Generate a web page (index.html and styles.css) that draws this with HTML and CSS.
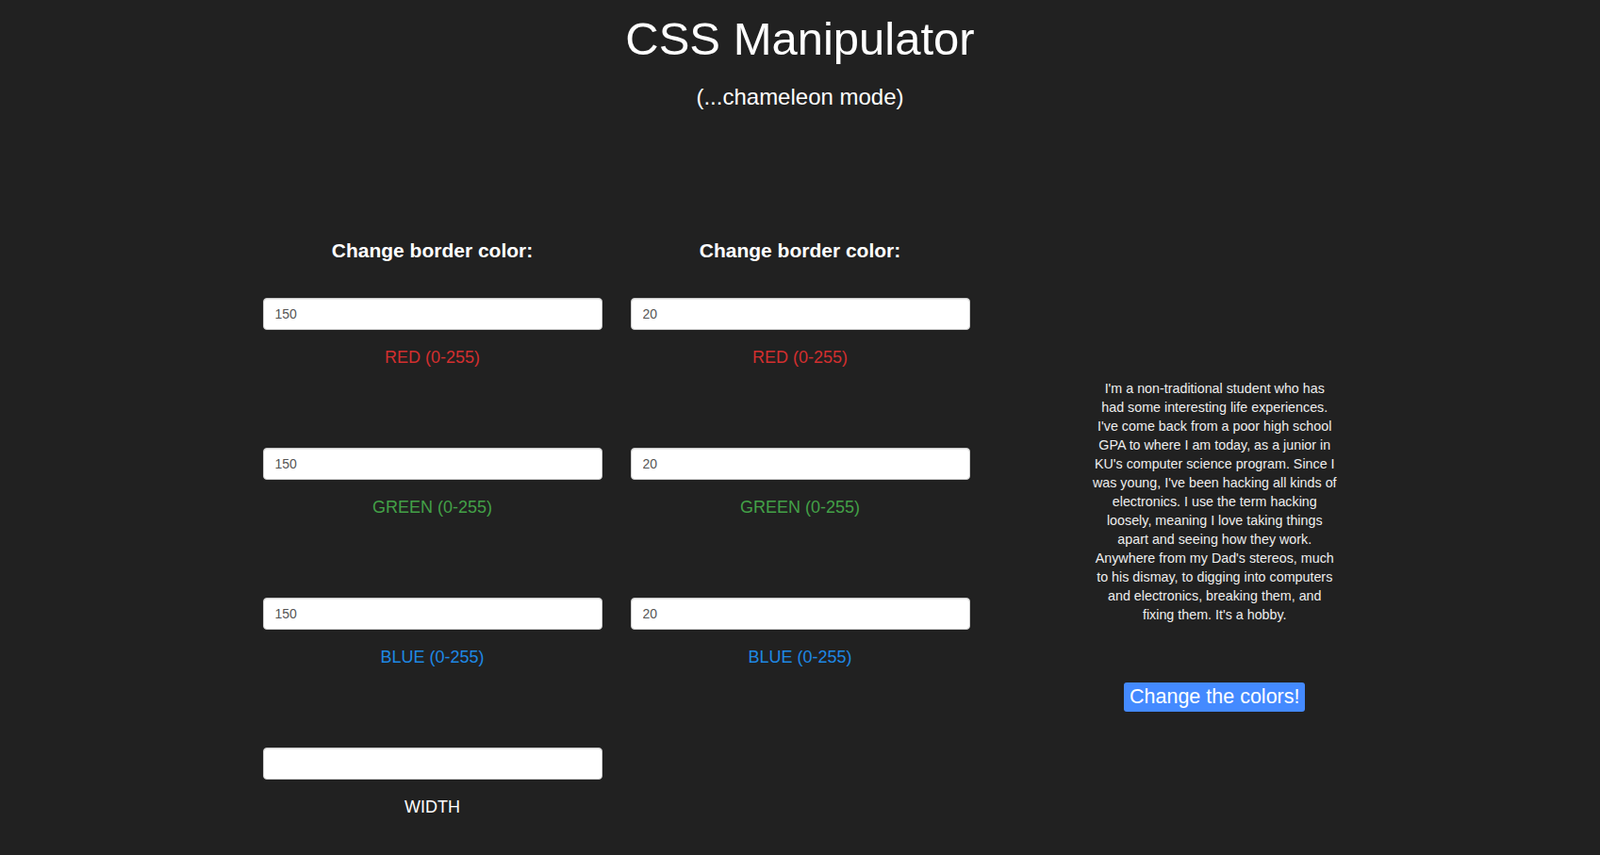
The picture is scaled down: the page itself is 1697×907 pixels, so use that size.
FILE: index.html
```html
<!DOCTYPE html>
<html lang="en">
<head>
<meta charset="utf-8">
<title>CSS Manipulator</title>
<link rel="stylesheet" href="styles.css">
</head>
<body>
<header class="page-header">
  <h1 class="title">CSS Manipulator</h1>
  <p class="subtitle">(...chameleon mode)</p>
</header>
<main class="container">
  <section class="col">
    <h3 class="col-heading">Change border color:</h3>
    <div class="field">
      <input class="form-control" type="text" value="150">
      <p class="field-label red">RED (0-255)</p>
    </div>
    <div class="field">
      <input class="form-control" type="text" value="150">
      <p class="field-label green">GREEN (0-255)</p>
    </div>
    <div class="field">
      <input class="form-control" type="text" value="150">
      <p class="field-label blue">BLUE (0-255)</p>
    </div>
    <div class="field">
      <input class="form-control" type="text" value="">
      <p class="field-label white">WIDTH</p>
    </div>
  </section>
  <section class="col">
    <h3 class="col-heading">Change border color:</h3>
    <div class="field">
      <input class="form-control" type="text" value="20">
      <p class="field-label red">RED (0-255)</p>
    </div>
    <div class="field">
      <input class="form-control" type="text" value="20">
      <p class="field-label green">GREEN (0-255)</p>
    </div>
    <div class="field">
      <input class="form-control" type="text" value="20">
      <p class="field-label blue">BLUE (0-255)</p>
    </div>
  </section>
  <section class="col col-about">
    <div class="about-box">
      <p class="about">I'm a non-traditional student who has had some interesting life experiences. I've come back from a poor high school GPA to where I am today, as a junior in KU's computer science program. Since I was young, I've been hacking all kinds of electronics. I use the term hacking loosely, meaning I love taking things apart and seeing how they work. Anywhere from my Dad's stereos, much to his dismay, to digging into computers and electronics, breaking them, and fixing them. It's a hobby.</p>
      <div class="btn-wrap">
        <button class="btn" type="button">Change the colors!</button>
      </div>
    </div>
  </section>
</main>
</body>
</html>
```

FILE: styles.css
```css
html, body {
  margin: 0;
  padding: 0;
}

body {
  background: #212121;
  color: #ffffff;
  font-family: "Liberation Sans", Arial, Helvetica, sans-serif;
  font-size: 14px;
  line-height: 20px;
  min-height: 907px;
}

.page-header {
  text-align: center;
  padding-top: 14px;
}

.title {
  margin: 0;
  font-size: 49px;
  font-weight: 400;
  line-height: 55px;
}

.subtitle {
  margin: 20px 0 0;
  font-size: 24px;
  line-height: 28px;
}

.container {
  width: 1170px;
  margin: 0 auto;
  display: grid;
  grid-template-columns: 390px 390px 390px;
  padding-top: 137px;
}

.col {
  padding: 0 15px;
  text-align: center;
}

.col-heading {
  margin: 0 0 39px;
  font-size: 21px;
  font-weight: 700;
  line-height: 23px;
}

.field {
  margin-bottom: 85px;
}

.form-control {
  display: block;
  box-sizing: border-box;
  width: 100%;
  height: 34px;
  margin: 0;
  padding: 6px 12px;
  font-family: "Liberation Sans", Arial, Helvetica, sans-serif;
  font-size: 14px;
  line-height: 20px;
  color: #555555;
  background: #ffffff;
  border: 1px solid #cccccc;
  border-radius: 4px;
  box-shadow: inset 0 1px 1px rgba(0, 0, 0, 0.075);
  outline: none;
}

.field-label {
  margin: 18px 0 0;
  font-size: 18px;
  line-height: 22px;
}

.red { color: #d32f2f; }
.green { color: #43a047; }
.blue { color: #1e88e5; }
.white { color: #ffffff; }

.col-about {
  padding-top: 148px;
}

.about-box {
  width: 259.5px;
  margin-left: 100px;
}

.about {
  margin: 0;
  color: #eeeeee;
  font-size: 14.3px;
  line-height: 20px;
}

.btn-wrap {
  margin-top: 62px;
}

.btn {
  font-family: "Liberation Sans", Arial, Helvetica, sans-serif;
  font-size: 21.5px;
  line-height: 27px;
  padding: 2px 6px;
  color: #ffffff;
  background: #448aff;
  border: none;
  border-radius: 3px;
  cursor: pointer;
}
```
